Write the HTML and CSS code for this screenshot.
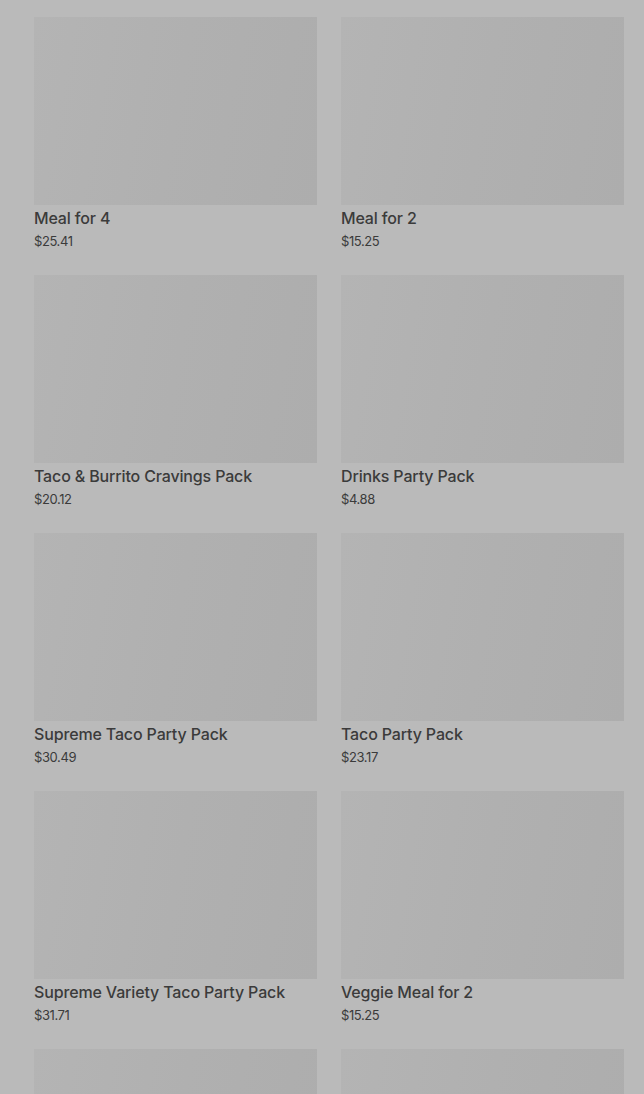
FILE: index.html
```html
<!DOCTYPE html>
<html>
<head>
<meta charset="utf-8">
<link rel="stylesheet" href="styles.css">
</head>
<body>
<main class="grid">
  <div class="card"><div class="thumb"></div><div class="title">Meal for 4</div><div class="price">$25.41</div></div>
  <div class="card"><div class="thumb"></div><div class="title">Meal for 2</div><div class="price">$15.25</div></div>
  <div class="card"><div class="thumb"></div><div class="title">Taco &amp; Burrito Cravings Pack</div><div class="price">$20.12</div></div>
  <div class="card"><div class="thumb"></div><div class="title">Drinks Party Pack</div><div class="price">$4.88</div></div>
  <div class="card"><div class="thumb"></div><div class="title">Supreme Taco Party Pack</div><div class="price">$30.49</div></div>
  <div class="card"><div class="thumb"></div><div class="title">Taco Party Pack</div><div class="price">$23.17</div></div>
  <div class="card"><div class="thumb"></div><div class="title">Supreme Variety Taco Party Pack</div><div class="price">$31.71</div></div>
  <div class="card"><div class="thumb"></div><div class="title">Veggie Meal for 2</div><div class="price">$15.25</div></div>
  <div class="card"><div class="thumb"></div></div>
  <div class="card"><div class="thumb"></div></div>
</main>
</body>
</html>
```
FILE: styles.css
```css
html, body {
  margin: 0;
  padding: 0;
  background: #bababa;
  height: 1094px;
  overflow: hidden;
}
body {
  font-family: Inter, Roboto, "Liberation Sans", sans-serif;
  color: #3b3b3b;
}
.grid {
  display: grid;
  grid-template-columns: 283px 283px;
  column-gap: 24px;
  row-gap: 24px;
  padding: 17px 20px 0 34px;
}
.card {
  display: flex;
  flex-direction: column;
}
.thumb {
  height: 188px;
  background: linear-gradient(100deg, #b4b4b4 0%, #b0b0b0 50%, #adadad 100%);
}
.title {
  font-size: 16px;
  font-weight: 500;
  line-height: 22px;
  letter-spacing: -0.15px;
  margin-top: 2px;
}
.price {
  font-size: 13px;
  line-height: 20px;
  letter-spacing: -0.4px;
  margin-top: 2px;
}
```
